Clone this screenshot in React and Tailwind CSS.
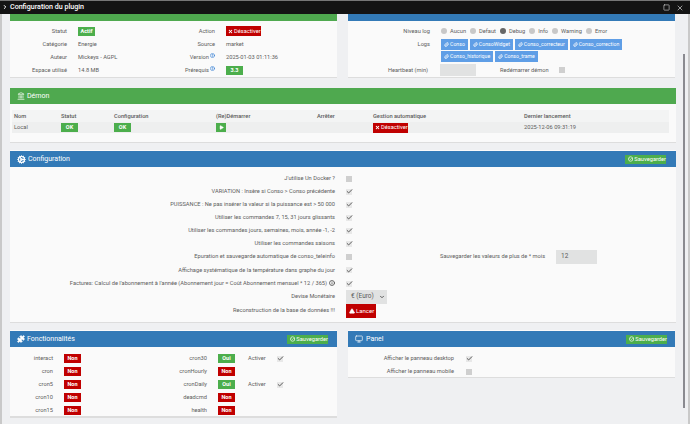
import React from 'react';
import { Landmark, Check, X, Play, Paperclip, CircleCheck, TriangleAlert, Cog, Info, HelpCircle, Puzzle, Monitor, ChevronRight, Square, ChevronDown } from 'lucide-react';

const Badge = ({ color = 'green', children, className = '' }) => (
  <span className={`inline-flex items-center justify-center h-[9px] w-[17px] text-[5.5px] font-bold text-white ${color === 'green' ? 'bg-[#4cae4c]' : 'bg-[#c00000]'} ${className}`}>
    {children}
  </span>
);

const StopButton = () => (
  <span className="inline-flex items-center gap-[1px] h-[10px] w-[35px] pl-[2px] bg-[#c00000] text-[5.7px] text-white">
    <X size={5} strokeWidth={5} />Désactiver
  </span>
);

const CheckBox = ({ on }) => (
  <span className={`flex items-center justify-center w-[6px] h-[6px] ${on ? 'bg-[#e8e8e8]' : 'bg-[#cfcfcf]'}`}>
    {on && <Check size={7} strokeWidth={3} className="text-[#444] shrink-0" />}
  </span>
);

const SaveButton = ({ className = '' }) => (
  <span className={`flex items-center gap-[1px] h-[9px] w-[41px] pl-[3px] bg-[#4cae4c] text-[5.7px] text-white ${className}`}>
    <CircleCheck size={6} strokeWidth={3} />Sauvegarder
  </span>
);

const PanelHeader = ({ color, icon, title, children }) => (
  <div className={color === 'green' ? 'flex items-center justify-between h-[16px] pl-[7px] pr-[8px] text-[7px] text-white bg-[#4fa94f]' : 'flex items-center justify-between h-[16px] mt-[1px] pl-[7px] pr-[8px] text-[7px] text-white bg-[#337ab7]'}>
    <span className="flex items-center gap-[1px]">{icon}{title}</span>
    {children}
  </div>
);

const LogTag = ({ children }) => (
  <span className="flex items-center gap-[1px] h-[11px] px-[3px] bg-[#5f9ee6] text-[5.2px] text-white">
    <Paperclip size={5} strokeWidth={3} />{children}
  </span>
);

const Radio = ({ on, children }) => (
  <span className="flex items-center gap-[3px]">
    <span className={`w-[6px] h-[6px] rounded-full ${on ? 'bg-[#666]' : 'bg-[#c8c8c8]'}`} />
    {children}
  </span>
);

const infoRows = [
  ['Statut', <Badge>Actif</Badge>, 'Action', <StopButton />],
  ['Catégorie', 'Energie', 'Source', 'market'],
  ['Auteur', 'Mickeys - AGPL', 'Version', '2025-01-03 01:11:36'],
  ['Espace utilisé', '14.8 MB', 'Prérequis', <Badge>3.3</Badge>],
];

const configRows = [
  ["J'utilise Un Docker ?", false],
  ['VARIATION : Insère si Conso > Conso précédente', true],
  ['PUISSANCE : Ne pas insérer la valeur si la puissance est > 50 000', true],
  ['Utiliser les commandes 7, 15, 31 jours glissants', true],
  ['Utiliser les commandes jours, semaines, mois, année -1, -2', true],
  ['Utiliser les commandes saisons', true],
];

const featLeft = ['interact', 'cron', 'cron5', 'cron10', 'cron15'];
const featRight = [
  ['cron30', true],
  ['cronHourly', false],
  ['cronDaily', true],
  ['deadcmd', false],
  ['health', false],
];

export default function App() {
  return (
    <div className="w-[690px] h-[424px] overflow-hidden flex flex-col bg-[#eff0f2] text-[5.7px] text-[#5c5c5c] font-['Roboto',sans-serif]">
      {/* barre de titre */}
      <div className="flex items-center justify-between h-[14px] shrink-0 border-t border-[#777] bg-[#141414] pl-[2px] pr-[6px] text-[7.1px] font-medium text-white">
        <span className="flex items-center gap-[2px]">
          <ChevronRight size={6} strokeWidth={4} />Configuration du plugin
        </span>
        <span className="flex items-center gap-[6px] text-[#ddd]">
          <Square size={7} strokeWidth={2} />
          <X size={8} strokeWidth={2} />
        </span>
      </div>

      <div className="flex flex-1 min-h-0">
        <div className="w-[2px] shrink-0 bg-[#c9c9c9]" />
        <div className="flex-1 min-w-0 flex flex-col pl-[8px]">
          {/* infos + logs */}
          <div className="grid grid-cols-[327px_327px] gap-x-[11px] shrink-0">
            <div className="h-[64px] bg-[#fafafa] border-b border-[#ddd]">
              <div className="h-[7px] bg-[#4fa94f]" />
              <div className="grid grid-cols-[57px_69px_57px_1fr] auto-rows-[13px] items-center gap-x-[11px] pt-[4px]">
                {infoRows.map((r) => (
                  <React.Fragment key={r[0]}>
                    <span className="text-right">{r[0]}</span>
                    <span>{r[1]}</span>
                    <span className="flex justify-end items-center gap-[1px]">
                      {r[2]}
                      {(r[2] === 'Version' || r[2] === 'Prérequis') && <HelpCircle size={5} strokeWidth={3} className="text-[#3b82d6] -mt-[3px]" />}
                    </span>
                    <span>{r[3]}</span>
                  </React.Fragment>
                ))}
              </div>
            </div>

            <div className="h-[64px] bg-[#fafafa] border-b border-[#ddd]">
              <div className="h-[7px] bg-[#337ab7]" />
              <div className="grid grid-cols-[82px_1fr] gap-x-[11px] pt-[4px]">
                <span className="text-right h-[13px] leading-[13px]">Niveau log</span>
                <span className="flex items-center gap-[4px] h-[13px]">
                  <Radio>Aucun</Radio>
                  <Radio>Defaut</Radio>
                  <Radio on>Debug</Radio>
                  <Radio>Info</Radio>
                  <Radio>Warning</Radio>
                  <Radio>Error</Radio>
                </span>
                <span className="text-right leading-[13px]">Logs</span>
                <span className="flex flex-wrap gap-x-[2px] gap-y-[1px] w-[195px] pt-[1px]">
                  <LogTag>Conso</LogTag>
                  <LogTag>ConsoWidget</LogTag>
                  <LogTag>Conso_correcteur</LogTag>
                  <LogTag>Conso_correction</LogTag>
                  <LogTag>Conso_historique</LogTag>
                  <LogTag>Conso_trame</LogTag>
                </span>
              </div>
              <div className="flex items-center mt-[2px] h-[12px]">
                <span className="w-[80px] text-right">Heartbeat (min)</span>
                <span className="ml-[12px] w-[36px] h-[12px] bg-[#e1e2e2]" />
                <span className="ml-[24px] w-[48px] whitespace-nowrap">Redémarrer démon</span>
                <span className="ml-[11px]"><CheckBox /></span>
              </div>
            </div>
          </div>

          {/* démon */}
          <div className="mt-[10px] h-[55px] w-[666px] shrink-0 bg-[#fafafa] border-b border-[#ddd]">
            <PanelHeader color="green" icon={<Landmark size={8} className="mr-[1px]" />} title="Démon" />
            <div className="mt-[6px] mr-[7px] ml-[2px] grid grid-cols-[47px_53px_102px_101px_56px_151px_1fr] bg-[#f3f4f4] pl-[2px] h-[23px]">
              {['Nom', 'Statut', 'Configuration', '(Re)Démarrer', 'Arrêter', 'Gestion automatique', 'Dernier lancement'].map((h) => (
                <span key={h} className="h-[12px] leading-[13px] font-medium">{h}</span>
              ))}
              <span className="h-[11px] leading-[11px] bg-[#eeefef] -ml-[2px] pl-[2px]">Local</span>
              <span className="flex items-center bg-[#eeefef]"><Badge>OK</Badge></span>
              <span className="flex items-center bg-[#eeefef]"><Badge>OK</Badge></span>
              <span className="flex items-center bg-[#eeefef]">
                <span className="flex items-center justify-center w-[10px] h-[9px] bg-[#4cae4c]"><Play size={5} fill="white" className="text-white" /></span>
              </span>
              <span className="bg-[#eeefef]" />
              <span className="flex items-center bg-[#eeefef]"><StopButton /></span>
              <span className="leading-[11px] bg-[#eeefef]">2025-12-06 09:31:19</span>
            </div>
          </div>

          {/* configuration */}
          <div className="mt-[7px] h-[173px] w-[666px] shrink-0 bg-[#fafafa] border-b border-[#ddd]">
            <PanelHeader color="blue" icon={<Cog size={9} strokeWidth={3} className="mr-[1px]" />} title="Configuration">
              <SaveButton className="mr-[2px]" />
            </PanelHeader>
            <div className="grid grid-cols-[325px_1fr] grid-rows-[13px_13px_13px_13px_13px_13px_13px_14px_13px_13px_15px] pt-[5px] items-center gap-x-[11px]">
              {configRows.map(([label, on]) => (
                <React.Fragment key={label}>
                  <span className="text-right">{label}</span>
                  <CheckBox on={on} />
                </React.Fragment>
              ))}
              <span className="text-right">Epuration et sauvegarde automatique de conso_teleinfo</span>
              <div className="flex items-center">
                <CheckBox />
                <span className="ml-[88px] w-[105px] whitespace-nowrap">Sauvegarder les valeurs de plus de * mois</span>
                <span className="ml-[11px] flex items-center w-[41px] h-[14px] pl-[5px] bg-[#e1e2e2] text-[6.5px]">12</span>
              </div>
              <span className="text-right">Affichage systématique de la température dans graphe du jour</span>
              <CheckBox on />
              <span className="flex justify-end items-center gap-[2px]">
                Factures: Calcul de l'abonnement à l'année (Abonnement jour = Coût Abonnement mensuel * 12 / 365)
                <Info size={6} strokeWidth={3} className="text-[#444]" />
              </span>
              <CheckBox on />
              <span className="text-right">Devise Monétaire</span>
              <span className="flex items-center justify-between w-[41px] h-[14px] pl-[5px] pr-[2px] bg-[#e1e2e2] text-[6.5px]">
                € (Euro)<ChevronDown size={6} strokeWidth={4} />
              </span>
              <span className="text-right">Reconstruction de la base de données !!!</span>
              <span className="flex items-center gap-[1px] w-[30px] h-[14px] pl-[3px] bg-[#c00000] text-[6px] text-white">
                <TriangleAlert size={6} fill="white" className="text-white" />Lancer
              </span>
            </div>
          </div>

          {/* fonctionnalités + panel */}
          <div className="mt-[7px] grid grid-cols-[327px_327px] gap-x-[11px] items-start">
            <div className="h-[88px] bg-[#fafafa] border-b-2 border-[#ddd]">
              <PanelHeader color="blue" icon={<Puzzle size={8} fill="white" className="mr-[1px]" />} title="Fonctionnalités">
                <SaveButton className="mr-[1px]" />
              </PanelHeader>
              <div className="grid grid-cols-[163px_1fr] pt-[5px]">
                <div>
                  {featLeft.map((f) => (
                    <div key={f} className="flex items-center h-[13px]">
                      <span className="w-[43px] text-right">{f}</span>
                      <Badge color="red" className="ml-[11px]">Non</Badge>
                    </div>
                  ))}
                </div>
                <div>
                  {featRight.map(([f, on]) => (
                    <div key={f} className="flex items-center h-[13px]">
                      <span className="w-[34px] text-right">{f}</span>
                      <Badge color={on ? 'green' : 'red'} className="ml-[11px]">{on ? 'Oui' : 'Non'}</Badge>
                      {on && <span className="ml-[13px] w-[18px]">Activer</span>}
                      {on && <span className="ml-[11px]"><CheckBox on /></span>}
                    </div>
                  ))}
                </div>
              </div>
            </div>

            <div className="h-[48px] bg-[#fafafa] border-b border-[#ddd]">
              <PanelHeader color="blue" icon={<Monitor size={8} className="mr-[2px]" />} title="Panel">
                <SaveButton />
              </PanelHeader>
              <div className="pt-[5px]">
                {[['Afficher le panneau desktop', true], ['Afficher le panneau mobile', false]].map(([l, on]) => (
                  <div key={l} className="flex items-center h-[13px]">
                    <span className="w-[106px] text-right">{l}</span>
                    <span className="ml-[12px]"><CheckBox on={on} /></span>
                  </div>
                ))}
              </div>
            </div>
          </div>
        </div>

        {/* ascenseur */}
        <div className="w-[14px] shrink-0 flex border-r-2 border-[#c9c9c9] pl-[7px] pt-[40px]">
          <div className="w-[2px] h-[354px] bg-[#8a8a90]" />
        </div>
      </div>
    </div>
  );
}
